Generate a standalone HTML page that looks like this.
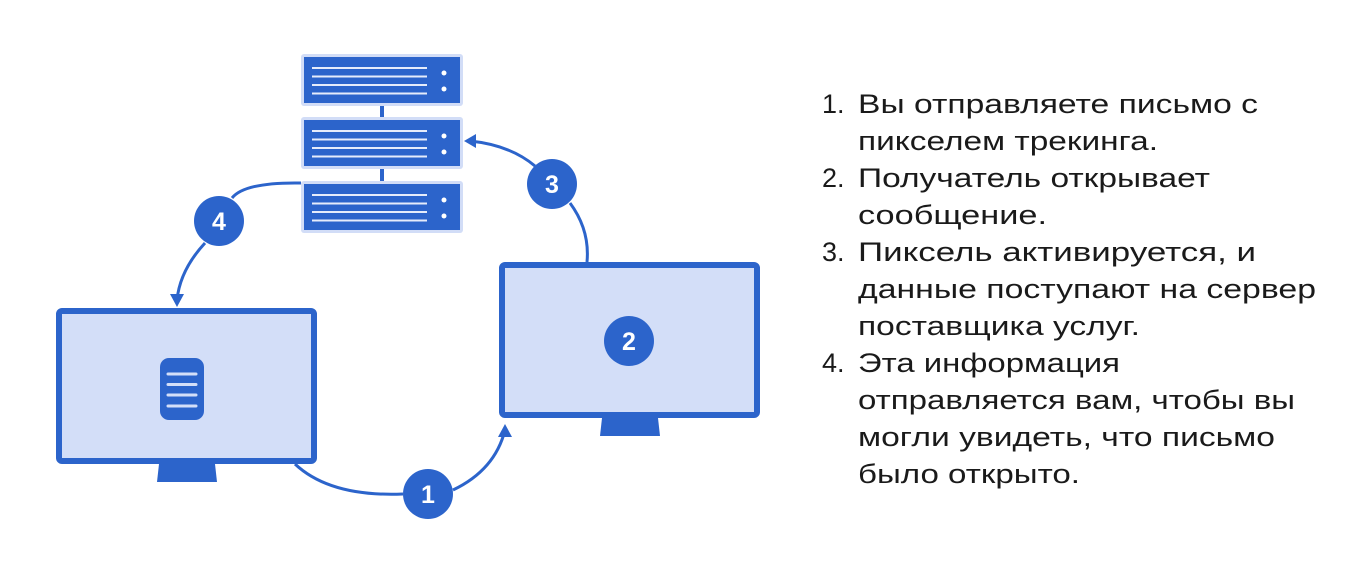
<!DOCTYPE html>
<html><head><meta charset="utf-8"><style>html,body{margin:0;padding:0;background:#fff;width:1353px;height:574px;overflow:hidden}</style></head>
<body>
<svg width="1353" height="574" viewBox="0 0 1353 574" xmlns="http://www.w3.org/2000/svg">
<defs>
<g id="srv">
<rect x="0" y="0" width="162" height="52" rx="3" fill="#d2ddf7"/>
<rect x="3" y="3" width="156" height="46" fill="#2c64cb"/>
<g stroke="#e6ecfb" stroke-width="2"><line x1="11" y1="14" x2="126" y2="14"/><line x1="11" y1="22.5" x2="126" y2="22.5"/><line x1="11" y1="31" x2="126" y2="31"/><line x1="11" y1="39.5" x2="126" y2="39.5"/></g>
<circle cx="143" cy="19" r="2.5" fill="#fff"/><circle cx="143" cy="35" r="2.5" fill="#fff"/>
</g>
</defs>
<g fill="none" stroke="#2c64cb" stroke-width="3">
<path d="M295 464 Q330 497 403 494"/>
<path d="M453 490 Q495 470 505 430"/>
<path d="M587 262 Q590 230 570 203"/>
<path d="M535 166 Q510 145 470 141"/>
<path d="M301 183 Q245 182 232 198"/>
<path d="M205 243 Q180 270 177 300"/>
<line x1="382" y1="106" x2="382" y2="117" stroke-width="4"/>
<line x1="382" y1="169" x2="382" y2="181" stroke-width="4"/>
</g>
<g fill="#2c64cb">
<path d="M505 424 L498 437 L512 437 Z"/>
<path d="M464 141 L476 134 L476 148 Z"/>
<path d="M177 307 L170 294 L184 294 Z"/>
</g>
<use href="#srv" x="301" y="54"/>
<use href="#srv" x="301" y="117"/>
<use href="#srv" x="301" y="181"/>
<!-- left monitor -->
<rect x="59" y="311" width="255" height="150" rx="3" fill="#d3def8" stroke="#2c64cb" stroke-width="6"/>
<path d="M159 464 L215 464 L217 482 L157 482 Z" fill="#2c64cb"/>
<rect x="160" y="358" width="44" height="62" rx="9" fill="#2c64cb"/>
<g stroke="#d3def8" stroke-width="3" stroke-linecap="round"><line x1="168" y1="374" x2="196" y2="374"/><line x1="168" y1="384.5" x2="196" y2="384.5"/><line x1="168" y1="395" x2="196" y2="395"/><line x1="168" y1="406" x2="196" y2="406"/></g>
<!-- right monitor -->
<rect x="502" y="265" width="255" height="150" rx="3" fill="#d3def8" stroke="#2c64cb" stroke-width="6"/>
<path d="M602 418 L658 418 L660 436 L600 436 Z" fill="#2c64cb"/>
<g fill="#2c64cb"><circle cx="629" cy="341" r="25"/><circle cx="428" cy="494" r="25"/><circle cx="552" cy="184" r="25"/><circle cx="219" cy="221" r="25"/></g>
<g fill="#fff" font-family="Liberation Sans, sans-serif" font-weight="bold" font-size="25" text-anchor="middle">
<text x="629" y="350">2</text><text x="428" y="503">1</text><text x="552" y="193">3</text><text x="219" y="230">4</text>
</g>
<g fill="#1a1a1a" font-family="Liberation Sans, sans-serif" font-size="27" lengthAdjust="spacingAndGlyphs">
<text x="822" y="113">1.</text>
<text x="858" y="113" textLength="400" lengthAdjust="spacingAndGlyphs">Вы отправляете письмо с</text>
<text x="858" y="150" textLength="300" lengthAdjust="spacingAndGlyphs">пикселем трекинга.</text>
<text x="822" y="187">2.</text>
<text x="858" y="187" textLength="352" lengthAdjust="spacingAndGlyphs">Получатель открывает</text>
<text x="858" y="224" textLength="189" lengthAdjust="spacingAndGlyphs">сообщение.</text>
<text x="822" y="261">3.</text>
<text x="858" y="261" textLength="398" lengthAdjust="spacingAndGlyphs">Пиксель активируется, и</text>
<text x="858" y="298" textLength="458" lengthAdjust="spacingAndGlyphs">данные поступают на сервер</text>
<text x="858" y="335" textLength="282" lengthAdjust="spacingAndGlyphs">поставщика услуг.</text>
<text x="822" y="372">4.</text>
<text x="858" y="372" textLength="262" lengthAdjust="spacingAndGlyphs">Эта информация</text>
<text x="858" y="409" textLength="437" lengthAdjust="spacingAndGlyphs">отправляется вам, чтобы вы</text>
<text x="858" y="446" textLength="417" lengthAdjust="spacingAndGlyphs">могли увидеть, что письмо</text>
<text x="858" y="483" textLength="222" lengthAdjust="spacingAndGlyphs">было открыто.</text>
</g>
</svg>
</body></html>
